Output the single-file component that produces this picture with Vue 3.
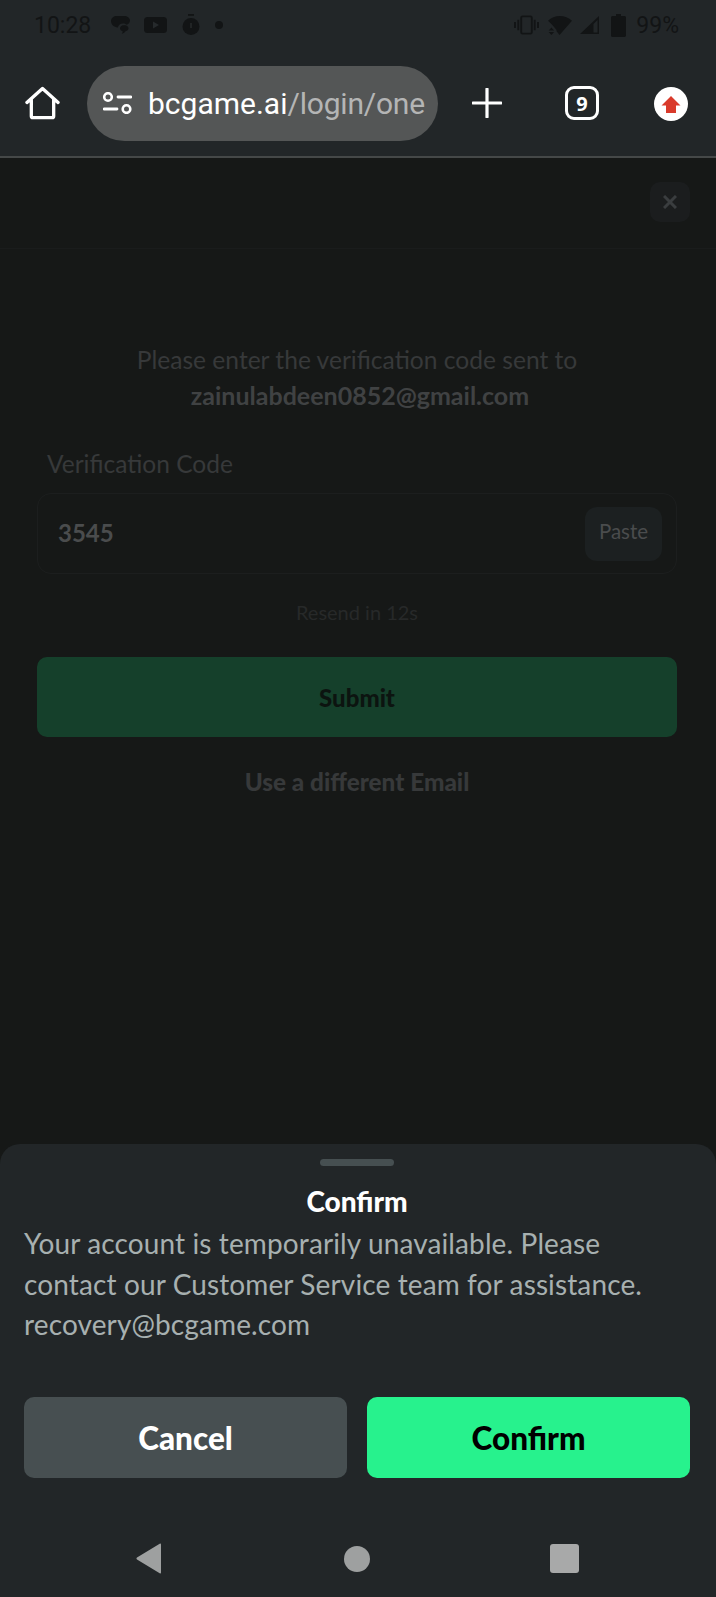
<script setup>
const lines = [
  "Your account is temporarily unavailable. Please",
  "contact our Customer Service team for assistance.",
  "recovery@bcgame.com"
];
</script>

<template>
  <div class="screen">
    <header class="chrome">
      <div class="status">
        <div class="status-left">
          <span class="time">10:28</span>
          <svg class="s-icon chat" viewBox="0 0 19 18"><path d="M6 0h7c3.300 0 6 1.800 6 4.500 0 2.200-1.600 3.800-3.500 4.300C14.800 8 13.500 7.600 12 7.600c-2.800 0-5 1.700-5 4-1.500-.2-7-1.200-7-6.600C0 2 2.700 0 6 0z" /><path d="M13 9c2.500 0 4.500 1.300 4.500 3.200 0 1.500-1 2.500-2.600 2.900-.8 1.200-2.200 2.200-4.100 2.900.6-.9.8-1.700.8-2.700-1.500-.4-2.600-1.600-2.600-3 0-1.900 1.900-3.300 4.500-3.300z" /></svg>
          <svg class="s-icon yt" viewBox="0 0 23 16"><rect x="0" y="0" width="23" height="16" rx="3.500" /><path d="M9 4.500l6 3.500-6 3.500z" fill="#262a2c" /></svg>
          <svg class="s-icon timer" viewBox="0 0 18 22"><rect x="6" y="0" width="6" height="1.800" /><circle cx="9" cy="12.500" r="8.500" /><rect x="8.500" y="9" width="1" height="5" fill="#303436" /></svg>
          <span class="dot"></span>
        </div>
        <div class="status-right">
          <svg class="s-icon vib" viewBox="0 0 26 20"><path d="M0 7h2v6H0zM3.500 4.500h2v11h-2zM20.500 4.500h2v11h-2zM24 7h2v6h-2z" /><rect x="7.500" y="1" width="11" height="18" rx="1.500" fill="none" stroke="#121415" stroke-width="2" /></svg>
          <svg class="s-icon wifi" viewBox="0 0 24 19"><path d="M0 4.800C3 2 7.300 0 11.800 0S21 2 24 4.800L11.500 19 8 14.500h1L5.600 10.500 3.400 8z" /><path d="M3.400 11.500l2.700 3H.7zM3.400 19l-2.700-3h5.400z" /></svg>
          <svg class="s-icon sig" viewBox="0 0 19 18"><path d="M19 0v18H0zM17.500 4L13.500 8v8.500h4z" fill-rule="evenodd" /></svg>
          <svg class="s-icon batt" viewBox="0 0 15 23"><path d="M5 0h5v2h3.500c.8 0 1.500.7 1.500 1.500V21.500c0 .8-.7 1.500-1.500 1.500h-12C.7 23 0 22.300 0 21.500V3.500C0 2.700.7 2 1.500 2H5z" /></svg>
          <span class="pct">99%</span>
        </div>
      </div>
      <div class="toolbar">
        <svg class="home" viewBox="0 0 36 34"><path d="M2 16.500L18 2l16 14.500M6.500 13v17.500c0 1 .8 1.500 1.500 1.500h20c.7 0 1.500-.5 1.500-1.500V13" fill="none" stroke="#fff" stroke-width="3.400" stroke-linecap="round" stroke-linejoin="round" /></svg>
        <div class="pill">
          <svg class="tune" viewBox="0 0 29 22"><circle cx="5" cy="5" r="3.800" fill="none" stroke="#fff" stroke-width="2.600" /><path d="M15 5h13M1 17h13" stroke="#fff" stroke-width="2.800" stroke-linecap="round" /><circle cx="23.500" cy="17" r="3.800" fill="none" stroke="#fff" stroke-width="2.600" /></svg>
          <span class="url"><span class="host">bcgame.ai</span><span class="path">/login/one</span></span>
        </div>
        <svg class="plus" viewBox="0 0 30 30"><path d="M15 1v28M1 15h28" stroke="#fff" stroke-width="3.200" stroke-linecap="round" /></svg>
        <div class="tabs">9</div>
        <svg class="update" viewBox="0 0 34 34"><circle cx="17" cy="17" r="17" fill="#fff" /><path d="M17 9l9.500 9.500H22V26H12v-7.500H7.500z" fill="#d93a2b" /></svg>
      </div>
    </header>

    <main class="page">
      <div class="topbar">
        <button class="close">
          <svg viewBox="0 0 14 14"><path d="M1 1l12 12M13 1L1 13" stroke="#3a3d3f" stroke-width="3" /></svg>
        </button>
      </div>
      <div class="form">
        <p class="hint">Please enter the verification code sent to</p>
        <p class="email">zainulabdeen0852@gmail.com</p>
        <label class="label">Verification Code</label>
        <div class="field">
          <span class="code">3545</span>
          <button class="paste">Paste</button>
        </div>
        <p class="resend">Resend in 12s</p>
        <button class="submit">Submit</button>
        <p class="other">Use a different Email</p>
      </div>
    </main>

    <section class="sheet">
      <div class="handle"></div>
      <h2 class="title">Confirm</h2>
      <div class="message">
        <p v-for="line in lines" :key="line">{{ line }}</p>
      </div>
      <div class="actions">
        <button class="btn cancel">Cancel</button>
        <button class="btn ok">Confirm</button>
      </div>
      <nav class="nav">
        <svg class="nav-back" viewBox="0 0 28 31"><path d="M26 1.500v28c0 .8-.6 1.200-1.300.7L2 16.500c-.7-.5-.7-1.500 0-2L24.700.8c.7-.5 1.300-.1 1.300.7z" fill="#9ea0a0" /></svg>
        <span class="nav-home"></span>
        <span class="nav-recent"></span>
      </nav>
    </section>
  </div>
</template>

<style scoped>
.screen {
  width: 716px;
  height: 1597px;
  display: flex;
  flex-direction: column;
  background: #161817;
  font-family: Lato, "Liberation Sans", sans-serif;
  overflow: hidden;
}

.chrome {
  height: 158px;
  box-sizing: border-box;
  background: #222628;
  border-bottom: 2px solid #454848;
}

.status {
  height: 50px;
  display: flex;
  justify-content: space-between;
  align-items: center;
  padding: 0 37px 0 34px;
  color: #121415;
  font-family: Roboto, sans-serif;
  font-size: 23px;
}

.status-left,
.status-right {
  display: flex;
  align-items: center;
}

.s-icon {
  display: block;
  fill: #121415;
}

.time {
  margin-right: 20px;
}

.chat {
  width: 19px;
  height: 18px;
  margin-right: 14px;
}

.yt {
  width: 23px;
  height: 16px;
  margin-right: 15px;
}

.timer {
  width: 18px;
  height: 22px;
  margin-right: 15px;
}

.dot {
  width: 8px;
  height: 8px;
  border-radius: 50%;
  background: #121415;
}

.vib {
  width: 25px;
  height: 20px;
  margin-right: 9px;
}

.wifi {
  width: 24px;
  height: 19px;
  margin-right: 8px;
}

.sig {
  width: 19px;
  height: 18px;
  margin-right: 12px;
}

.batt {
  width: 15px;
  height: 23px;
  margin-right: 10px;
}

.toolbar {
  height: 106px;
  display: flex;
  align-items: center;
  padding: 0 0 0 25px;
}

.home {
  width: 35px;
  height: 34px;
  margin-right: 27px;
  flex: none;
}

.pill {
  width: 351px;
  height: 75px;
  border-radius: 38px;
  background: #545656;
  display: flex;
  align-items: center;
  padding: 0 14px 0 16px;
  box-sizing: border-box;
  overflow: hidden;
  flex: none;
}

.tune {
  width: 29px;
  height: 22px;
  margin-right: 16px;
  flex: none;
}

.url {
  font-family: Roboto, sans-serif;
  font-size: 30px;
  white-space: nowrap;
}

.host {
  color: #fff;
}

.path {
  color: #b4b5b5;
  letter-spacing: -0.2px;
}

.plus {
  width: 30px;
  height: 30px;
  margin-left: 34px;
  flex: none;
}

.tabs {
  width: 34px;
  height: 34px;
  margin-left: 63px;
  border: 3px solid #fff;
  border-radius: 9px;
  box-sizing: border-box;
  color: #fff;
  font-family: "Open Sans", sans-serif;
  font-size: 20px;
  font-weight: 700;
  display: flex;
  align-items: center;
  justify-content: center;
  flex: none;
}

.update {
  width: 34px;
  height: 34px;
  margin: 1px 0 0 55px;
  flex: none;
}

.page {
  flex: 1;
  min-height: 0;
}

.topbar {
  height: 91px;
  box-sizing: border-box;
  display: flex;
  align-items: center;
  justify-content: flex-end;
  padding: 0 26px 3px 0;
  border-bottom: 1px solid #1a1c1c;
}

.close {
  width: 40px;
  height: 40px;
  padding: 0;
  border: 0;
  border-radius: 10px;
  background: #1b1d1e;
  display: flex;
  align-items: center;
  justify-content: center;
}

.close svg {
  width: 14px;
  height: 14px;
}

.form {
  padding: 93px 39px 0 37px;
}

.hint,
.email,
.resend,
.other {
  margin: 0;
  text-align: center;
}

.hint {
  color: #37393a;
  font-size: 24.6px;
  line-height: 35px;
}

.email {
  color: #404243;
  font-size: 25px;
  font-weight: 700;
  line-height: 36px;
  padding-left: 6px;
}

.label {
  display: block;
  margin: 33px 0 0 10px;
  color: #37393a;
  font-size: 24.5px;
  line-height: 36px;
}

.field {
  height: 81px;
  margin-top: 11px;
  box-sizing: border-box;
  border: 1px solid #1c1e1e;
  border-radius: 14px;
  display: flex;
  align-items: center;
  justify-content: space-between;
  padding: 0 14px 0 20px;
}

.code {
  color: #4a4c4d;
  font-size: 24px;
  font-weight: 700;
  padding-bottom: 3px;
}

.paste {
  width: 77px;
  height: 54px;
  padding: 0 0 5px;
  border: 0;
  border-radius: 12px;
  background: #1c2021;
  color: #4a4c4d;
  font-family: inherit;
  font-size: 20.5px;
}

.resend {
  margin-top: 19px;
  color: #272929;
  font-size: 20px;
  line-height: 38px;
}

.submit {
  width: 100%;
  height: 80px;
  margin-top: 26px;
  border: 0;
  border-radius: 10px;
  background: #15402b;
  color: #0c1410;
  font-family: inherit;
  font-size: 24px;
  font-weight: 900;
}

.other {
  margin-top: 27px;
  color: #37393a;
  font-size: 24.3px;
  font-weight: 900;
  line-height: 36px;
}

.sheet {
  height: 453px;
  box-sizing: border-box;
  background: #222628;
  border-radius: 20px 20px 0 0;
  padding: 15px 26px 0 24px;
  display: flex;
  flex-direction: column;
}

.handle {
  width: 74px;
  height: 7px;
  border-radius: 4px;
  background: #464f51;
  align-self: center;
}

.title {
  margin: 19px 0 0;
  color: #fff;
  font-size: 28px;
  font-weight: 900;
  line-height: 32px;
  text-align: center;
}

.message {
  margin-top: 6px;
  color: #a7b0b0;
  font-size: 28px;
  letter-spacing: 0.12px;
  line-height: 40.7px;
}

.message p {
  margin: 0;
  white-space: nowrap;
}

.actions {
  display: grid;
  grid-template-columns: 1fr 1fr;
  gap: 20px;
  margin-top: 52px;
}

.btn {
  height: 81px;
  border: 0;
  border-radius: 10px;
  font-family: inherit;
  font-size: 31.5px;
  font-weight: 900;
}

.cancel {
  background: #474f51;
  color: #fff;
}

.ok {
  background: #27f28d;
  color: #000;
}

.nav {
  display: grid;
  grid-template-columns: 28px 26px 29px;
  justify-content: space-between;
  align-items: center;
  margin-top: 65px;
  padding: 0 111px;
}

.nav-back {
  width: 28px;
  height: 31px;
}

.nav-home {
  width: 26px;
  height: 26px;
  border-radius: 50%;
  background: #9ea0a0;
}

.nav-recent {
  width: 29px;
  height: 29px;
  border-radius: 3px;
  background: #a8a9a9;
}
</style>
